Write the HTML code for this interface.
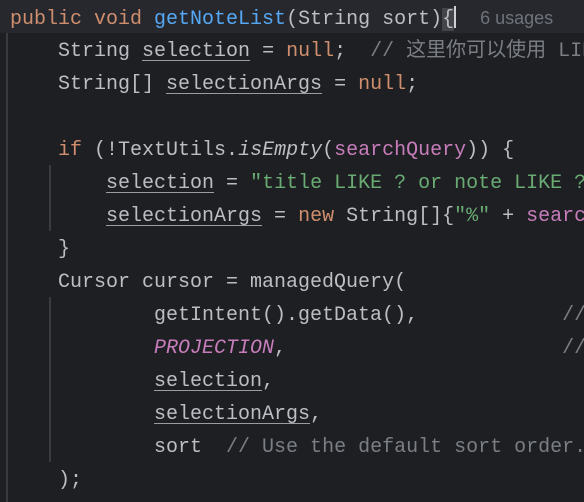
<!DOCTYPE html>
<html><head><meta charset="utf-8"><style>
html,body{margin:0;padding:0;}
body{width:584px;height:502px;background:#1e1f22;overflow:hidden;position:relative;font-family:"Liberation Mono","Noto Sans CJK SC",monospace;font-size:20px;color:#bcbec4;}
.cur{position:absolute;left:0;top:0;width:584px;height:33px;background:#26282e;}
.l{position:absolute;left:10px;height:33px;line-height:33px;white-space:pre;margin-top:2px;}
.k{color:#cf8e6d}.f{color:#56a8f5}.s{color:#6aab73}.c{color:#7a7e85}.p{color:#c77dbb}.i{font-style:italic}
.u{text-decoration:underline;text-decoration-color:#9a9ca2;text-underline-offset:4px;text-decoration-thickness:1px}
.g{position:absolute;width:2px;background:#393b40;}
.hint{font-family:"Liberation Sans",sans-serif;font-size:18px;color:#6f737a;}
.br{background:#43454a;}
.caret{display:inline-block;width:2px;height:22px;background:#ced0d6;vertical-align:-4px;margin-left:0}
</style></head><body>
<div class="cur"></div>
<div class="g" style="left:6px;top:33px;height:469px"></div>
<div class="g" style="left:49px;top:165px;height:66px"></div>
<div class="g" style="left:49px;top:297px;height:165px"></div>
<div class="l" style="top:0"><span class="k">public void </span><span class="f">getNoteList</span>(String sort)<span class="br">{</span><span class="caret"></span>  <span class="hint">6 usages</span></div>
<div class="l" style="top:33px">    String <span class="u">selection</span> = <span class="k">null</span>;  <span class="c">// 这里你可以使用 LIKE</span></div>
<div class="l" style="top:66px">    String[] <span class="u">selectionArgs</span> = <span class="k">null</span>;</div>
<div class="l" style="top:132px">    <span class="k">if</span> (!TextUtils.<span class="i">isEmpty</span>(<span class="p">searchQuery</span>)) {</div>
<div class="l" style="top:165px">        <span class="u">selection</span> = <span class="s">"title LIKE ? or note LIKE ?"</span></div>
<div class="l" style="top:198px">        <span class="u">selectionArgs</span> = <span class="k">new</span> String[]{<span class="s">"%"</span> + <span class="p">searchQuery</span></div>
<div class="l" style="top:231px">    }</div>
<div class="l" style="top:264px">    Cursor cursor = managedQuery(</div>
<div class="l" style="top:297px">            getIntent().getData(),            <span class="c">//</span></div>
<div class="l" style="top:330px">            <span class="p i">PROJECTION</span>,                       <span class="c">//</span></div>
<div class="l" style="top:363px">            <span class="u">selection</span>,</div>
<div class="l" style="top:396px">            <span class="u">selectionArgs</span>,</div>
<div class="l" style="top:429px">            sort  <span class="c">// Use the default sort order.</span></div>
<div class="l" style="top:462px">    );</div>
</body></html>
